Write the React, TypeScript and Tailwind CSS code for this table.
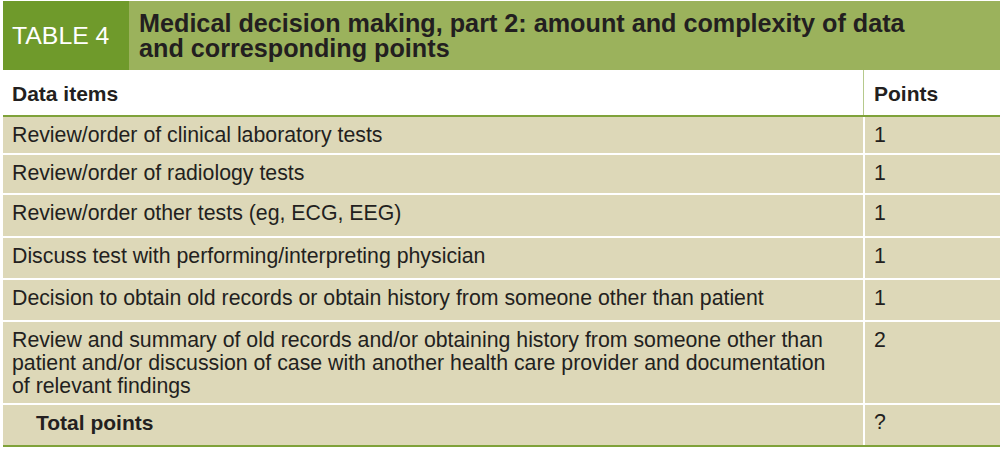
import React from "react";

const rows: { item: React.ReactNode; pts: string; h: string }[] = [
  { item: "Review/order of clinical laboratory tests", pts: "1", h: "h-[36px]" },
  { item: "Review/order of radiology tests", pts: "1", h: "h-[38px]" },
  { item: "Review/order other tests (eg, ECG, EEG)", pts: "1", h: "h-[41px]" },
  { item: "Discuss test with performing/interpreting physician", pts: "1", h: "h-[40px]" },
  { item: "Decision to obtain old records or obtain history from someone other than patient", pts: "1", h: "h-[40px]" },
  {
    item: (
      <>
        Review and summary of old records and/or obtaining history from someone other than
        <br />
        patient and/or discussion of case with another health care provider and documentation
        <br />
        of relevant findings
      </>
    ),
    pts: "2",
    h: "h-[81px]",
  },
];

export default function App() {
  return (
    <div
      className="w-[1000px] h-[455px] bg-white pl-[3px] pt-[1px] text-[#231f20]"
      style={{ fontFamily: '"Liberation Sans", Arial, sans-serif' }}
    >
      <div className="flex h-[69px]">
        <div className="w-[126px] bg-[#6f9a2b] flex items-center pl-[9px] pt-[2px] text-white text-[24.8px] leading-none">
          TABLE 4
        </div>
        <div className="flex-1 bg-[#9bb25c] flex items-center pl-[10px] pt-[1px] font-bold text-[25.2px] leading-[25.5px]">
          <div>
            Medical decision making, part 2: amount and complexity of data
            <br />
            and corresponding points
          </div>
        </div>
      </div>
      <div className="flex h-[47px] border-b-2 border-[#7fa23a] font-bold text-[21px]">
        <div className="w-[860px] flex items-center pl-[9px] pt-[3px]">Data items</div>
        <div className="w-[1px] bg-[#b6c98c]" />
        <div className="flex-1 flex items-center pl-[10px] pt-[3px]">Points</div>
      </div>
      <div className="flex flex-col gap-[2px] text-[21.3px] leading-[23px]">
        {rows.map((r, i) => (
          <div key={i} className={`flex ${r.h} bg-[#ddd8b8]`}>
            <div className="w-[860px] pl-[9px] pt-[7px]">{r.item}</div>
            <div className="w-[2px] bg-white" />
            <div className="flex-1 pl-[9px] pt-[7px]">{r.pts}</div>
          </div>
        ))}
        <div className="flex h-[42px] bg-[#ddd8b8] border-b-2 border-[#7fa23a]">
          <div className="w-[860px] pl-[33px] pt-[6px] font-bold text-[21px]">Total points</div>
          <div className="w-[2px] bg-white" />
          <div className="flex-1 pl-[9px] pt-[6px]">?</div>
        </div>
      </div>
    </div>
  );
}
